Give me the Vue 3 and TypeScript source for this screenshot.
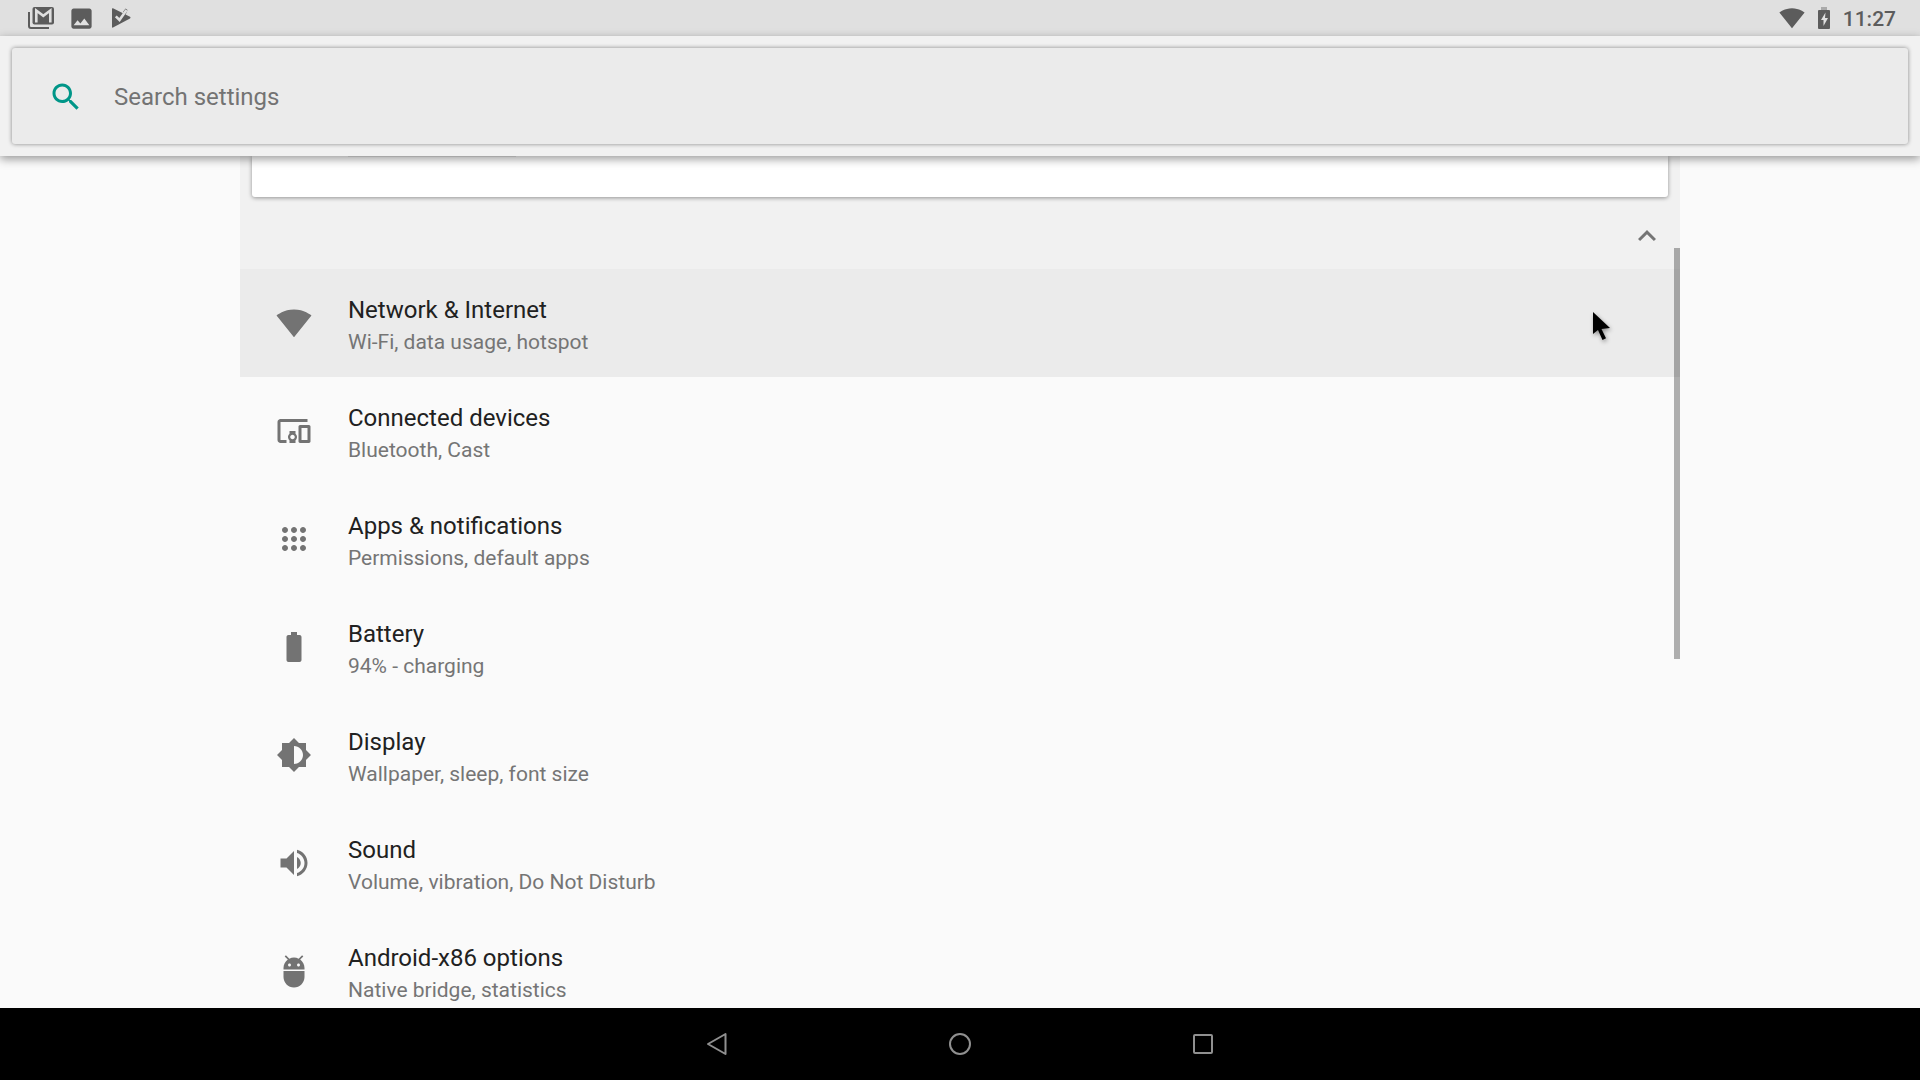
<script setup lang="ts">
import { ref } from 'vue'

interface Entry {
  title: string
  summary: string
  icon: string
}

const query = ref('')

const entries: Entry[] = [
  {
    title: 'Network & Internet',
    summary: 'Wi-Fi, data usage, hotspot',
    icon: 'M12.01 21.49L23.64 7c-.45-.34-4.93-4-11.64-4C5.28 3 .81 6.66.36 7l11.63 14.49.01.01.01-.01z',
  },
  {
    title: 'Connected devices',
    summary: 'Bluetooth, Cast',
    icon: 'M3 6h18V4H3c-1.1 0-2 .9-2 2v12c0 1.1.9 2 2 2h4v-2H3V6zm10 6H9v1.78c-.61.55-1 1.33-1 2.22s.39 1.67 1 2.22V20h4v-1.78c.61-.55 1-1.34 1-2.22s-.39-1.67-1-2.22V12zm-2 5.5c-.83 0-1.5-.67-1.5-1.5s.67-1.5 1.5-1.5 1.5.67 1.5 1.5-.67 1.5-1.5 1.5zM22 8h-6c-.5 0-1 .5-1 1v10c0 .5.5 1 1 1h6c.5 0 1-.5 1-1V9c0-.5-.5-1-1-1zm-1 10h-4v-8h4v8z',
  },
  {
    title: 'Apps & notifications',
    summary: 'Permissions, default apps',
    icon: 'M6 8c1.1 0 2-.9 2-2s-.9-2-2-2-2 .9-2 2 .9 2 2 2zm6 12c1.1 0 2-.9 2-2s-.9-2-2-2-2 .9-2 2 .9 2 2 2zm-6 0c1.1 0 2-.9 2-2s-.9-2-2-2-2 .9-2 2 .9 2 2 2zm0-6c1.1 0 2-.9 2-2s-.9-2-2-2-2 .9-2 2 .9 2 2 2zm6 0c1.1 0 2-.9 2-2s-.9-2-2-2-2 .9-2 2 .9 2 2 2zm4-8c0 1.1.9 2 2 2s2-.9 2-2-.9-2-2-2-2 .9-2 2zm-4 2c1.1 0 2-.9 2-2s-.9-2-2-2-2 .9-2 2 .9 2 2 2zm6 6c1.1 0 2-.9 2-2s-.9-2-2-2-2 .9-2 2 .9 2 2 2zm0 6c1.1 0 2-.9 2-2s-.9-2-2-2-2 .9-2 2 .9 2 2 2z',
  },
  {
    title: 'Battery',
    summary: '94% - charging',
    icon: 'M15.67 4H14V2h-4v2H8.33C7.6 4 7 4.6 7 5.33v15.33C7 21.4 7.6 22 8.33 22h7.33c.74 0 1.34-.6 1.34-1.33V5.33C17 4.6 16.4 4 15.67 4z',
  },
  {
    title: 'Display',
    summary: 'Wallpaper, sleep, font size',
    icon: 'M20 15.31L23.31 12 20 8.69V4h-4.69L12 .69 8.69 4H4v4.69L.69 12 4 15.31V20h4.69L12 23.31 15.31 20H20v-4.69zM12 18V6c3.31 0 6 2.69 6 6s-2.69 6-6 6z',
  },
  {
    title: 'Sound',
    summary: 'Volume, vibration, Do Not Disturb',
    icon: 'M3 9v6h4l5 5V4L7 9H3zm13.5 3c0-1.77-1.02-3.29-2.5-4.03v8.05c1.48-.73 2.5-2.25 2.5-4.02zM14 3.23v2.06c2.89.86 5 3.54 5 6.71s-2.11 5.85-5 6.71v2.06c4.01-.91 7-4.49 7-8.77s-2.99-7.86-7-8.77z',
  },
  {
    title: 'Android-x86 options',
    summary: 'Native bridge, statistics',
    icon: 'M5 16c0 3.87 3.13 7 7 7s7-3.13 7-7v-4H5v4zM16.12 4.37l2.1-2.1-.82-.83-2.3 2.31C14.16 3.28 13.12 3 12 3s-2.16.28-3.09.75L6.6 1.44l-.82.83 2.1 2.1C6.14 5.64 5 7.68 5 10v1h14v-1c0-2.32-1.14-4.36-2.88-5.63zM9 9c-.55 0-1-.45-1-1s.45-1 1-1 1 .45 1 1-.45 1-1 1zm6 0c-.55 0-1-.45-1-1s.45-1 1-1 1 .45 1 1-.45 1-1 1z',
  },
]
</script>

<template>
  <div class="screen">
    <div class="status">
      <div class="status-group notices">
        <svg width="26" height="22" viewBox="0 0 26 22" aria-hidden="true">
          <path d="M1 5v14q0 2 2 2h18" fill="none" stroke="#5c5c5c" stroke-width="2" />
          <rect x="4.5" y="0" width="21.5" height="17.5" rx="2" fill="#5c5c5c" />
          <path d="M8.300 15.500V3.500l7 5.300 7-5.300v12" fill="none" stroke="#e0e0e0" stroke-width="2.600" />
        </svg>
        <svg width="27" height="27" viewBox="0 0 24 24" fill="#5c5c5c" aria-hidden="true">
          <path d="M21 19V5c0-1.100-.9-2-2-2H5c-1.100 0-2 .9-2 2v14c0 1.100.9 2 2 2h14c1.100 0 2-.9 2-2zM8.500 13.500l2.500 3.010L14.500 12l4.500 6H5l3.500-4.500z" />
        </svg>
        <svg width="26" height="20" viewBox="-3 0 26 20" aria-hidden="true">
          <path d="M0 .8Q0 0 1 .3L18 8.800q1.200.8 0 1.600L1 19.600q-1 .3-1-.6z" fill="#5c5c5c" />
          <path d="M11 4l2.500-3.500 2 1.500-2 5z" fill="#5c5c5c" />
          <path d="M3.800 8.400l3.700 3.600L14.500 2" fill="none" stroke="#e0e0e0" stroke-width="2.600" />
        </svg>
      </div>
      <div class="status-group system">
        <svg width="26" height="26" viewBox="0 0 24 24" fill="#5c5c5c" aria-hidden="true">
          <path :d="entries[0].icon" />
        </svg>
        <svg width="12" height="22" viewBox="0 0 12 22" aria-hidden="true">
          <path d="M3 0h6v3H3z" fill="#aaa" />
          <rect y="3" width="12" height="19" rx="1" fill="#5c5c5c" />
          <path d="M7.500 5.500L3 13h2.500v6L10 11H7z" fill="#e0e0e0" />
        </svg>
        <time class="clock">11:27</time>
      </div>
    </div>

    <header class="header">
      <form class="search" role="search" @submit.prevent>
        <label for="settings-search" aria-label="Search settings">
          <svg class="icon" viewBox="0 0 24 24" fill="#009688" aria-hidden="true">
            <path d="M15.500 14h-.79l-.28-.27C15.410 12.590 16 11.110 16 9.500 16 5.910 13.090 3 9.500 3S3 5.910 3 9.500 5.910 16 9.500 16c1.610 0 3.090-.59 4.230-1.570l.27.28v.79l5 4.990L20.490 19l-4.990-5zm-6 0C7.010 14 5 11.990 5 9.500S7.010 5 9.500 5 14 7.010 14 9.500 11.990 14 9.500 14z" />
          </svg>
        </label>
        <input id="settings-search" v-model="query" type="text" placeholder="Search settings" />
      </form>
    </header>

    <main class="content">
      <div class="column">
        <section class="suggestions">
          <div class="card"><div class="card-action"></div></div>
          <button class="collapse" type="button" aria-label="Collapse suggestions">
            <svg width="36" height="36" viewBox="0 0 24 24" fill="#757575" aria-hidden="true">
              <path d="M12 8l-6 6 1.410 1.410L12 10.830l4.590 4.580L18 14z" />
            </svg>
          </button>
        </section>
        <nav>
          <a v-for="(entry, i) in entries" :key="entry.title" href="#" class="row" :class="{ hovered: i === 0 }">
            <svg class="icon" viewBox="0 0 24 24" fill="#737373" aria-hidden="true">
              <path :d="entry.icon" />
            </svg>
            <span class="text">
              <span class="title">{{ entry.title }}</span>
              <span class="summary">{{ entry.summary }}</span>
            </span>
          </a>
        </nav>
        <div class="scrollbar"></div>
        <svg class="pointer" width="28" height="38" viewBox="0 0 28 38" aria-hidden="true">
          <path d="M4 4v22l5-4 4.500 10 3.500-1.800L12.500 21l8.500-1z" fill="#000" />
        </svg>
      </div>
    </main>

    <footer class="navbar">
      <button type="button" aria-label="Back">
        <svg width="26" height="26" viewBox="0 0 26 26"><path d="M21.500 3v20L4 13z" /></svg>
      </button>
      <button type="button" aria-label="Home">
        <svg width="26" height="26" viewBox="0 0 26 26"><circle cx="13" cy="13" r="10" /></svg>
      </button>
      <button type="button" aria-label="Overview">
        <svg width="26" height="26" viewBox="0 0 26 26"><rect x="4" y="4" width="18" height="18" rx="1" /></svg>
      </button>
    </footer>
  </div>
</template>

<style>
body {
  background: #fafafa;
}
</style>

<style scoped>
* {
  box-sizing: border-box;
}

.screen {
  display: flex;
  flex-direction: column;
  height: 100vh;
  overflow: hidden;
  background: #fafafa;
  font-family: Roboto, sans-serif;
}

svg {
  display: block;
  flex: none;
}

.icon {
  width: 36px;
  height: 36px;
}

.status {
  display: flex;
  flex: none;
  align-items: center;
  justify-content: space-between;
  height: 36px;
  padding: 0 24px 0 28px;
  background: #e0e0e0;
}

.status-group {
  display: flex;
  align-items: center;
}

.notices {
  gap: 14px;
}

.system {
  gap: 13px;
}

.clock {
  color: #5c5c5c;
  font-size: 21px;
  font-weight: 500;
  line-height: 34px;
  padding-top: 2px;
}

.header {
  position: relative;
  z-index: 1;
  flex: none;
  padding: 12px;
  background: #f1f1f1;
  box-shadow: 0 3px 9px rgba(0, 0, 0, 0.4);
}

.search {
  display: flex;
  align-items: center;
  gap: 30px;
  height: 96px;
  padding: 2px 36px 0;
  border-radius: 3px;
  background: #ebebeb;
  box-shadow: 0 0 4px rgba(0, 0, 0, 0.45);
}

.search input {
  flex: 1;
  min-width: 0;
  padding: 0;
  border: 0;
  outline: 0;
  background: transparent;
  color: #212121;
  font: 24px/32px Roboto, sans-serif;
}

.search input::placeholder {
  color: #737373;
  opacity: 1;
}

.content {
  flex: 1;
  min-height: 0;
  padding: 0 12.5%;
  overflow: hidden;
}

.column {
  position: relative;
}

.suggestions {
  padding: 0 12px 15px;
  background: #f1f1f1;
}

.card {
  height: 41px;
  padding-left: 96px;
  border-radius: 0 0 3px 3px;
  background: #fff;
  box-shadow: 0 1px 4px rgba(0, 0, 0, 0.4);
}

.card-action {
  width: 168px;
  height: 1px;
  background: #e8e8e8;
}

.collapse {
  display: block;
  margin: 21px 3px 0 auto;
  padding: 0;
  border: 0;
  background: none;
}

.row {
  display: flex;
  align-items: center;
  gap: 36px;
  height: 108px;
  padding: 0 36px;
  color: #212121;
  text-decoration: none;
}

.hovered {
  background: #ebebeb;
}

.text {
  display: flex;
  flex-direction: column;
  padding-top: 6px;
}

.title {
  font-size: 24px;
  line-height: 32px;
}

.summary {
  color: #757575;
  font-size: 21px;
  line-height: 32px;
}

.scrollbar {
  position: absolute;
  top: 92px;
  right: 0;
  width: 6px;
  height: 411px;
  background: rgba(0, 0, 0, 0.3);
}

.pointer {
  position: absolute;
  top: 152px;
  right: 63px;
  filter: drop-shadow(1px 2px 2px rgba(0, 0, 0, 0.4));
}

.navbar {
  display: flex;
  flex: none;
  align-items: center;
  justify-content: center;
  height: 72px;
  background: #000;
}

.navbar button {
  display: flex;
  justify-content: center;
  width: 243px;
  padding: 0;
  border: 0;
  background: none;
}

.navbar svg {
  fill: none;
  stroke: #909090;
  stroke-width: 2;
  stroke-linejoin: round;
}
</style>
